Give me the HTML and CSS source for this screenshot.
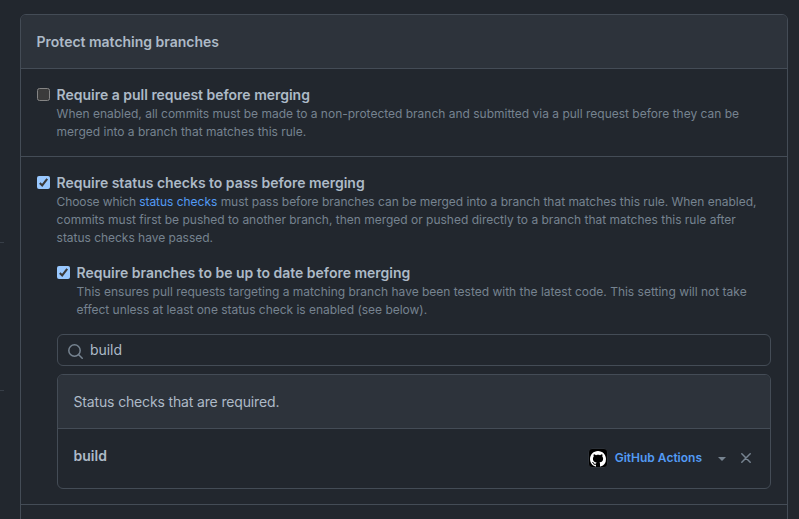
FILE: index.html
```html
<!DOCTYPE html>
<html lang="en">
<head>
<meta charset="utf-8">
<title>Branch protection rule</title>
<link rel="stylesheet" href="styles.css">
</head>
<body>
<div class="page">
  <aside class="rail"><span class="rail-line"></span><span class="rail-line"></span></aside>
  <main class="box">
    <header class="box-header"><h1>Protect matching branches</h1></header>
    <section class="rule rule-pr">
      <span class="check"></span>
      <div class="rule-body">
        <h2>Require a pull request before merging</h2>
        <p>When enabled, all commits must be made to a non-protected branch and submitted via a pull request before they can be<br>merged into a branch that matches this rule.</p>
      </div>
    </section>
    <section class="rule rule-status">
      <span class="check checked"><svg viewBox="0 0 13 13"><path d="M2.8 7 5.2 9.4 10.2 2.8"/></svg></span>
      <div class="rule-body">
        <h2 class="snug">Require status checks to pass before merging</h2>
        <p><span class="tight">Choose which </span><span class="snug"><a>status checks</a> must pass before branches can be merged into a branch that matches this rule. When enabled,</span><br>commits must first be pushed to another branch, then merged or pushed directly to a branch that matches this rule after<br><span class="snug">status checks have passed.</span></p>
        <div class="subrule">
          <span class="check checked"><svg viewBox="0 0 13 13"><path d="M2.8 7 5.2 9.4 10.2 2.8"/></svg></span>
          <div class="rule-body">
            <h2>Require branches to be up to date before merging</h2>
            <p>This ensures pull requests targeting a matching branch have been tested with the latest code. This setting will not take<br><span class="snug">effect unless at least one status check is enabled (see below).</span></p>
          </div>
        </div>
        <div class="search">
          <svg class="search-icon" viewBox="0 0 15 15"><circle cx="6.5" cy="6.5" r="5.7"/><path d="m10.7 10.7 3.5 3.5"/></svg>
          <span>build</span>
        </div>
        <div class="checks">
          <div class="checks-header"><span>Status checks that are required.</span></div>
          <div class="checks-row">
            <strong>build</strong>
            <span class="avatar"><svg viewBox="0 0 16 16"><path d="M8 0C3.58 0 0 3.58 0 8c0 3.54 2.29 6.53 5.47 7.59.4.07.55-.17.55-.38 0-.19-.01-.82-.01-1.49-2.01.37-2.53-.49-2.69-.94-.09-.23-.48-.94-.82-1.13-.28-.15-.68-.52-.01-.53.63-.01 1.08.58 1.23.82.72 1.21 1.87.87 2.33.66.07-.52.28-.87.51-1.07-1.78-.2-3.64-.89-3.64-3.95 0-.87.31-1.59.82-2.15-.08-.2-.36-1.02.08-2.12 0 0 .67-.21 2.2.82.64-.18 1.32-.27 2-.27s1.36.09 2 .27c1.53-1.04 2.2-.82 2.2-.82.44 1.1.16 1.92.08 2.12.51.56.82 1.27.82 2.15 0 3.07-1.87 3.75-3.65 3.95.29.25.54.73.54 1.48 0 1.07-.01 1.93-.01 2.2 0 .21.15.46.55.38A8.01 8.01 0 0 0 16 8c0-4.42-3.58-8-8-8Z"/></svg></span>
            <a class="app">GitHub Actions</a>
            <span class="caret"></span>
            <svg class="close" viewBox="0 0 10 10"><path d="m.8.8 8.4 8.4M9.2.8.8 9.2"/></svg>
          </div>
        </div>
      </div>
    </section>
  </main>
</div>
</body>
</html>
```
FILE: styles.css
```css
* { box-sizing: border-box; }
body { margin: 0; background: #22272e; color: #adbac7; font-family: Inter, sans-serif; overflow: hidden; }
h1, h2, p { margin: 0; }
.page { display: flex; height: 519px; overflow: hidden; }
.rail { width: 20px; padding-top: 242px; }
.rail-line { display: block; width: 4px; height: 1px; margin-bottom: 147px; background: #373e47; }
.box { width: 768px; height: 540px; margin-top: 14px; border: 1px solid #444c56; border-radius: 6px; overflow: hidden; flex: none; }
.box-header { height: 54px; padding: 0 16px; display: flex; align-items: center; background: #2d333b; border-bottom: 1px solid #444c56; }
h1, h2 { font-size: 14px; font-weight: 600; line-height: 21px; letter-spacing: -.015px; text-indent: -.4px; white-space: nowrap; }
p { font-size: 12px; line-height: 18px; color: #768390; letter-spacing: -.005px; margin-left: -.4px; white-space: nowrap; }
a { color: #539bf5; }
.tight { letter-spacing: -.12px; }
.snug { letter-spacing: -.03px; }
.rule { display: flex; padding: 15px 16px 0; border-bottom: 1px solid #444c56; }
.rule-pr { height: 88px; }
.rule-status { height: 348px; }
.check { flex: none; width: 13px; height: 13px; margin: 4px 7px 0 0; border: 1px solid #858585; border-radius: 2.5px; background: #3b3b3b; }
.checked { border: 0; border-radius: 2px; background: #99c8ff; }
.check svg { display: block; width: 13px; height: 13px; fill: none; stroke: #3b3b3b; stroke-width: 2.1; }
.subrule { display: flex; margin-top: 15px; }
.search { width: 714px; height: 32px; margin-top: 15px; padding: 0 9px 1px 10px; display: flex; align-items: center; gap: 7px; border: 1px solid #444c56; border-radius: 6px; font-size: 14px; letter-spacing: -.05px; }
.search-icon { width: 15px; height: 15px; margin-top: 3px; fill: none; stroke: #768390; stroke-width: 1.5; stroke-linecap: round; }
.checks { width: 714px; height: 115px; margin-top: 8px; border: 1px solid #444c56; border-radius: 6px; overflow: hidden; font-size: 14px; }
.checks-header { height: 54px; padding: 0 15.5px; display: flex; align-items: center; background: #2d333b; border-bottom: 1px solid #444c56; letter-spacing: -.15px; }
.checks-row { height: 58px; padding: 0 19px 0 15.5px; display: flex; align-items: center; }
.checks-row strong { font-weight: 600; margin-right: auto; padding-bottom: 5px; }
.avatar { width: 20px; height: 20px; padding: 2px 1px 0; border: 1px solid #2b3037; border-radius: 4px; background: #000; }
.avatar svg { display: block; width: 16px; height: 16px; fill: #fff; }
.app { margin-left: 7px; padding-bottom: 2px; font-size: 12px; font-weight: 600; }
.caret { margin: 2px 15px 0 16px; border: 4px solid transparent; border-top-color: #768390; border-bottom: 0; }
.close { width: 10px; height: 10px; fill: none; stroke: #768390; stroke-width: 1.5; stroke-linecap: round; }
```
